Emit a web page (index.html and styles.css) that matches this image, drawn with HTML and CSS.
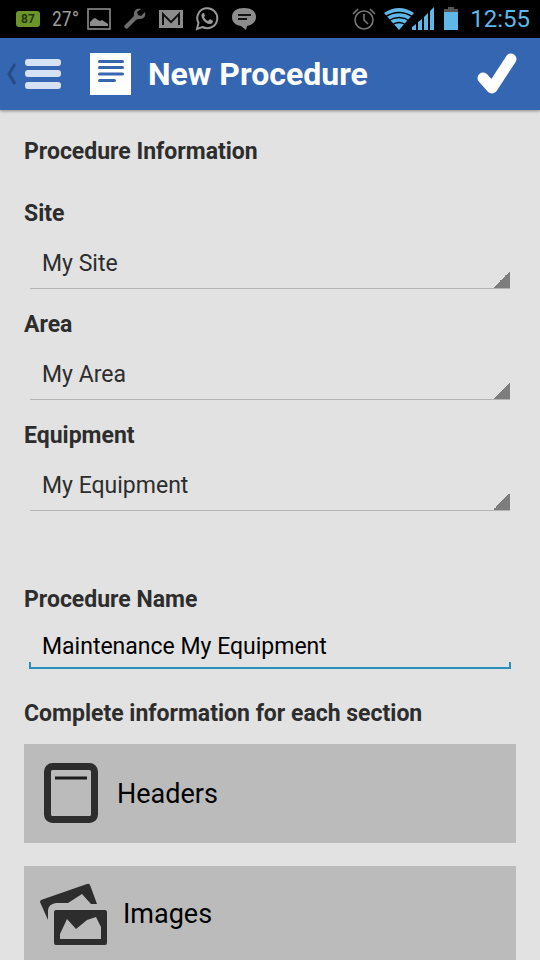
FILE: index.html
```html
<!DOCTYPE html>
<html lang="en">
<head>
<meta charset="utf-8">
<meta name="viewport" content="width=device-width, initial-scale=1">
<title>New Procedure</title>
<link rel="stylesheet" href="styles.css">
</head>
<body>
<div class="status">
  <div class="status-left">
    <span class="charge">87</span>
    <span class="temp">27°</span>
    <svg width="24" height="22" viewBox="0 0 24 22"><rect x="1" y="1" width="22" height="20" fill="none" stroke="#8c8c8c" stroke-width="1.6"/><path d="M3 18v-4l3-3 2-1 3 2 2 1 2-1 3 2 3 2v2z" fill="#8c8c8c"/></svg>
    <svg width="24" height="22" viewBox="0 0 24 22"><path d="M22 4l-4 4-3-1-1-3 4-3c-4-1-7 1-7 5 0 1 0 2-1 3L2 17c-2 2 1 5 3 3l8-8c1-1 2-1 4-1 4 0 6-3 5-7z" fill="#6e6e6e"/></svg>
    <svg width="24" height="22" viewBox="0 0 24 22"><path fill="#8c8c8c" d="M0 2h24v18H0z"/><path d="M4 17V6l8 8 8-8v11" fill="none" stroke="#111" stroke-width="2"/><path d="M4 3l8 8 8-8" fill="none" stroke="#8c8c8c" stroke-width="2"/></svg>
    <svg width="24" height="24" viewBox="0 0 24 24"><path d="M2 22l1.500-6a10 10 0 1 1 4 4z" fill="none" stroke="#999" stroke-width="2"/><path d="M8 6c-2 1-2 3-1 5 2 4 5 6 8 6 2 0 3-2 3-3l-3-2-2 2c-2-1-3-2-4-4l1-1-1-3z" fill="#999"/></svg>
    <svg width="26" height="24" viewBox="0 0 26 24"><path d="M13 1c7 0 12 3 12 9 0 5-4 8-9 9l-1 4-5-4C4 18 1 15 1 10c0-6 5-9 12-9z" fill="#8c8c8c"/><path d="M7 8h13M7 12h9" stroke="#151515" stroke-width="1.800"/></svg>
  </div>
  <div class="status-right">
    <svg width="24" height="24" viewBox="0 0 24 24" fill="none" stroke="#777" stroke-width="1.600"><circle cx="12" cy="13" r="9"/><path d="M12 7v6l4 4M1 7l5-5M23 7l-5-5"/></svg>
    <svg width="52" height="24" viewBox="0 0 52 24"><path d="M0 6Q15-4 30 6L15 23z" fill="#5fb6e8"/><path d="M1 10q14-9 28 0M4 14q11-7 22 0M8 18q7-5 14 0" fill="none" stroke="#000" stroke-width="1.400"/><path d="M28 23v-3l4-3v6zM34 23v-8l4-3v11zM40 23V10l4-4v17zM46 23V4l4-4v23z" fill="#5fb6e8"/></svg>
    <svg class="battery" width="14" height="24" viewBox="0 0 14 24"><path d="M4 0h6v2h4v4H0V2h4z" fill="#555"/><path d="M0 5h14v18H0z" fill="#5fb6e8"/></svg>
    <time class="clock">12:55</time>
  </div>
</div>
<header class="bar">
  <button class="menu" type="button" aria-label="Menu">
    <svg width="54" height="32" viewBox="0 0 54 32"><path d="M8 6L2 16l6 10" fill="none" stroke="#264b85" stroke-width="3"/><g fill="#d6e1f3"><rect x="18" y="1" width="36" height="7" rx="3"/><rect x="18" y="12" width="36" height="7" rx="3"/><rect x="18" y="24" width="36" height="7" rx="3"/></g></svg>
  </button>
  <svg class="doc" width="41" height="42" viewBox="0 0 41 42"><path fill="#fff" d="M0 0h41v42H0z"/><path d="M9.500 8.500h23M9.500 14.500h23M9.500 21h23M9.500 27.500h15" stroke="#3866ae" stroke-width="3" stroke-linecap="round"/></svg>
  <h1>New Procedure</h1>
  <button class="done" type="button" aria-label="Done">
    <svg width="42" height="42" viewBox="0 0 42 42"><path d="M6 25l9 10L34 6" fill="none" stroke="#fff" stroke-width="11" stroke-linecap="round" stroke-linejoin="round"/></svg>
  </button>
</header>
<main>
  <form>
    <h2>Procedure Information</h2>
    <div class="field"><label for="site">Site</label><select id="site"><option>My Site</option></select></div>
    <div class="field"><label for="area">Area</label><select id="area"><option>My Area</option></select></div>
    <div class="field"><label for="equipment">Equipment</label><select id="equipment"><option>My Equipment</option></select></div>
    <div class="field name"><label for="name">Procedure Name</label><input id="name" type="text" value="Maintenance My Equipment"></div>
    <h2 class="sections-title">Complete information for each section</h2>
    <div class="sections">
      <button class="card" type="button">
        <svg width="54" height="62" viewBox="0 0 54 62"><rect x="3.500" y="3.500" width="47" height="53" rx="5" fill="none" stroke="#2d2d2d" stroke-width="7"/><path d="M11 15h32" stroke="#1c1c1c" stroke-width="3"/></svg>
        Headers
      </button>
      <button class="card images" type="button">
        <svg width="68" height="62" viewBox="0 0 68 62"><path d="M0 19q0-1 1-2L47 1q2-1 3 1l7 19h-6L42 11 28 20H16q-8 1-8 8v9z" fill="#2d2d2d"/><path fill="#2d2d2d" fill-rule="evenodd" d="M16 27h49q2 0 2 2v31q0 2-2 2H16q-2 0-2-2V29q0-2 2-2zM20 56h41V44l-5-10-9 3-11 9-9-10-7 15z"/></svg>
        Images
      </button>
    </div>
  </form>
</main>
</body>
</html>
```
FILE: styles.css
```css
* { box-sizing: border-box; }

body {
  margin: 0;
  height: 100vh;
  display: flex;
  flex-direction: column;
  background: #e2e2e2;
  color: #2d2d2d;
  font-family: Roboto, sans-serif;
}

svg { display: block; flex: none; }

button {
  border: 0;
  background: none;
  padding: 0;
  font: inherit;
  color: inherit;
}

.status {
  flex: none;
  height: 38px;
  padding: 0 10px 0 16px;
  display: flex;
  align-items: center;
  justify-content: space-between;
  background: #000;
}

.status-left { display: flex; align-items: center; gap: 12px; }
.status-right { display: flex; align-items: center; gap: 8px; }

.charge {
  width: 24px;
  height: 16px;
  border-radius: 3px;
  background: #6d9428;
  color: #26380a;
  font-size: 12px;
  font-weight: 700;
  line-height: 16px;
  text-align: center;
}

.temp {
  width: 23px;
  color: #999;
  font-family: "Roboto Condensed", "Liberation Sans Narrow", Roboto, sans-serif;
  font-size: 20px;
}

.clock {
  margin-left: 4px;
  color: #5fb6e8;
  font-size: 24px;
}

.bar {
  flex: none;
  height: 72px;
  padding: 0 21px 0 7px;
  display: flex;
  align-items: center;
  background: #3566b2;
  box-shadow: 0 1px 3px rgba(0, 0, 0, 0.4);
}

.doc { margin-left: 29px; }

h1 {
  flex: 1;
  margin: 0 0 0 17px;
  color: #fff;
  font-size: 32px;
  font-weight: 700;
}

main {
  flex: 1;
  min-height: 0;
  padding: 28px 24px 24px;
  overflow-y: auto;
  scrollbar-width: none;
}

h2, label {
  display: block;
  margin: 0;
  font-size: 23px;
  font-weight: 700;
  line-height: 28px;
}

.field { margin-top: 22px; }
h2 + .field { margin-top: 34px; }
.field.name { margin-top: 75px; }

select, input {
  display: block;
  width: calc(100% - 12px);
  margin: 8px 6px 0;
  padding: 2px 12px 0;
  border: 0;
  border-radius: 0;
  outline: 0;
  appearance: none;
  font-family: inherit;
  font-size: 23px;
}

select {
  height: 53px;
  border-bottom: 1px solid #b4b4b4;
  background: linear-gradient(135deg, transparent 50%, #7d7d7d 50%) right bottom / 18px 18px no-repeat border-box;
  color: #2d2d2d;
}

input {
  width: calc(100% - 10px);
  height: 47px;
  margin: 8px 5px 0;
  padding: 2px 13px 0;
  color: #000;
  background:
    linear-gradient(#2a8fbd, #2a8fbd) left bottom / 100% 2px no-repeat,
    linear-gradient(#2a8fbd, #2a8fbd) left bottom / 2px 7px no-repeat,
    linear-gradient(#2a8fbd, #2a8fbd) right bottom / 2px 7px no-repeat;
}

.sections-title { margin-top: 31px; }

.sections {
  margin-top: 16px;
  display: grid;
  gap: 23px;
}

.card {
  min-height: 99px;
  padding: 0 20px;
  display: flex;
  align-items: center;
  gap: 19px;
  background: #bbb;
  color: #000;
  font-size: 27px;
}

.card.images { padding: 0 16px 4px; gap: 15px; }
```
